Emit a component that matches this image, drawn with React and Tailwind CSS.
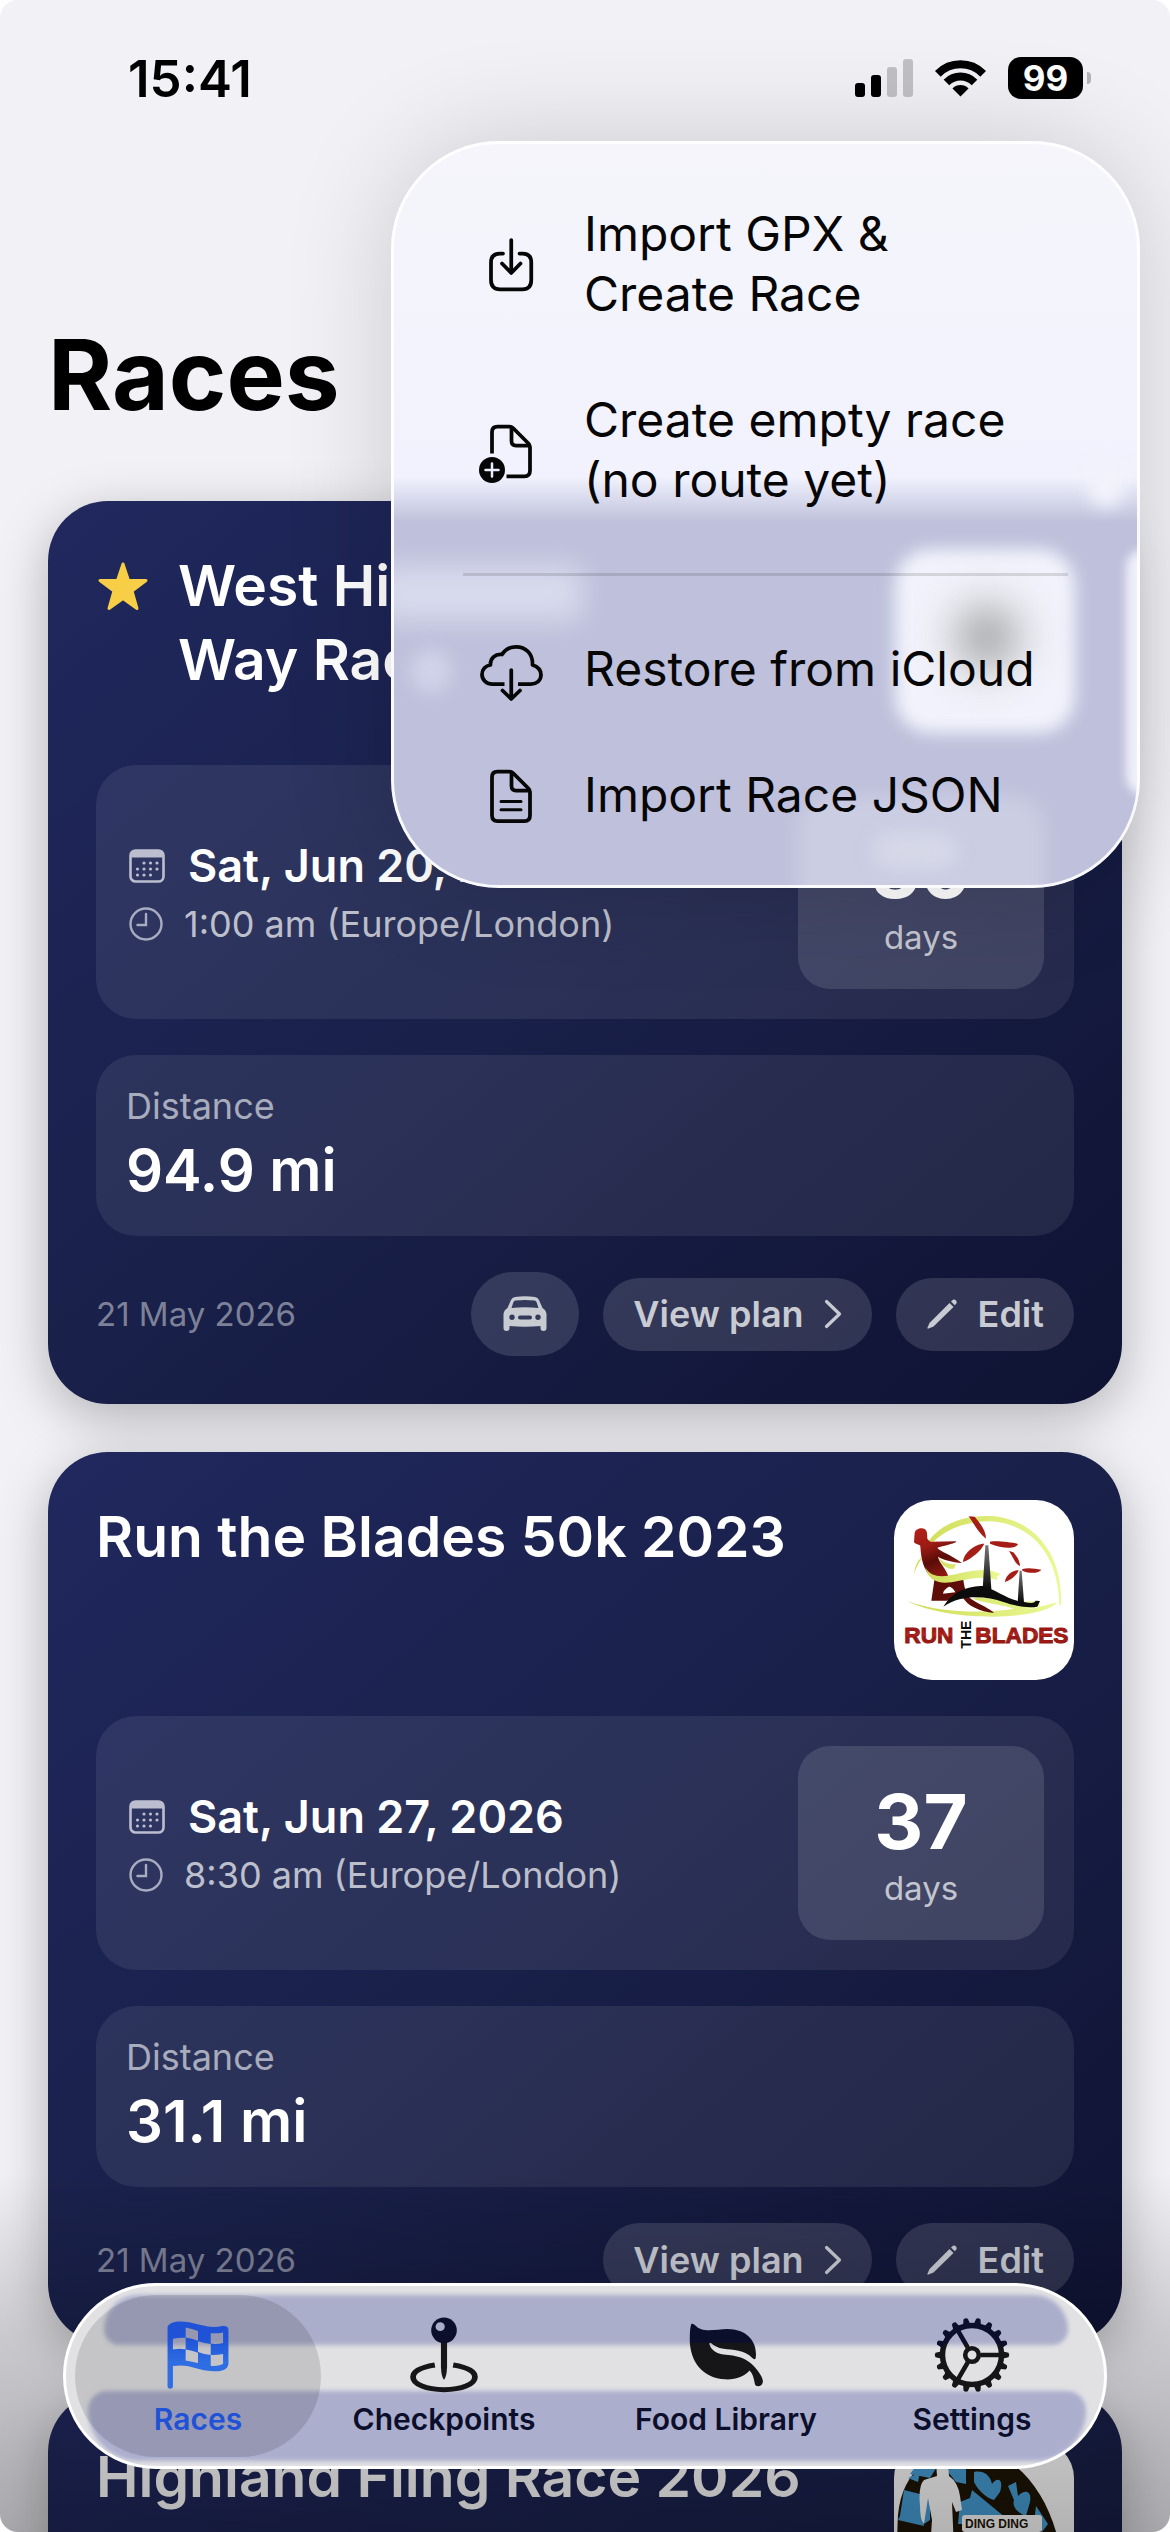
import React from "react";

function Wifi() {
  return (
    <svg width="51" height="37" viewBox="0 0 51 37" aria-hidden="true">
      <defs>
        <clipPath id="wifi-wedge">
          <polygon points="25.5,36.5 -12,-1 63,-1" />
        </clipPath>
      </defs>
      <g clipPath="url(#wifi-wedge)" fill="none" stroke="#000">
        <circle cx="25.5" cy="36" r="31.7" strokeWidth="8" />
        <circle cx="25.5" cy="36" r="19.5" strokeWidth="8" />
        <circle cx="25.5" cy="36" r="11" fill="#000" stroke="none" />
      </g>
    </svg>
  );
}

function Signal() {
  return (
    <svg width="58" height="38" viewBox="0 0 58 38" aria-hidden="true">
      <rect x="0" y="24" width="10" height="14" rx="3" />
      <rect x="16" y="16" width="10" height="22" rx="3" />
      <rect x="32" y="8" width="10" height="30" rx="3" fill="#c1c1c5" />
      <rect x="48" y="0" width="10" height="38" rx="3" fill="#c1c1c5" />
    </svg>
  );
}

function StatusBar() {
  return (
    <div className="flex h-[156px] items-center justify-between pl-[128px] pr-[79px]">
      <span className="text-[51px] leading-none font-semibold text-black">15:41</span>
      <div className="flex items-center gap-[22px]">
        <Signal />
        <Wifi />
        <div className="flex items-center gap-1">
          <span className="flex h-[42px] w-[75px] items-center justify-center rounded-[13px] bg-black text-[35px] leading-none font-bold text-white">
            99
          </span>
          <span className="h-3 w-1 rounded-r-full bg-[#b4b4b8]" />
        </div>
      </div>
    </div>
  );
}

const menuIcon = {
  width: 65,
  height: 70,
  fill: "none",
  stroke: "#060606",
  strokeWidth: 7.5,
  strokeLinecap: "round",
  strokeLinejoin: "round",
  "aria-hidden": true,
  className: "-my-[5px] shrink-0",
};

function ImportIcon() {
  return (
    <svg viewBox="196 199 130 140" {...menuIcon}>
      <path d="M244 248H238Q220 248 220 266V301Q220 319.500 238 319.500H283Q300.500 319.500 300.500 301V266Q300.500 248 283 248H277" />
      <path d="M260.500 221V286M242 268L260.500 287L279 268" />
    </svg>
  );
}

function NewDocIcon() {
  return (
    <svg viewBox="196 573 130 140" {...menuIcon}>
      <path strokeLinecap="butt" d="M222 650V607Q222 596 233 596H257Q261 596 264 599L295 630Q298 633 298 637V684Q298 695.500 287 695.500H251" />
      <path d="M261 598V625Q261 634 270 634H296" />
      <circle cx="222" cy="683" r="26" fill="#060606" stroke="none" />
      <path d="M222 670V696M209 683H235" stroke="#eceffc" strokeWidth="5" />
    </svg>
  );
}

function CloudDownIcon() {
  return (
    <svg viewBox="196 1013 130 140" {...menuIcon}>
      <path strokeLinecap="butt" d="M247 1113H223C211 1113 202 1105 202 1094C202 1084 209 1076 219 1075C218 1062 229 1052 242 1054C248 1044 258 1038.500 270 1038.500C289 1038.500 304 1052 303 1075C313 1078 320 1085 320 1095C320 1106 311 1113 300 1113H274" />
      <path d="M260.500 1085V1142M243 1126L260.500 1143L278 1126" />
    </svg>
  );
}

function DocIcon() {
  return (
    <svg viewBox="196 1267 130 140" {...menuIcon}>
      <path d="M222 1301Q222 1290 233 1290H257Q261 1290 264 1293L295 1324Q298 1327 298 1331V1378Q298 1389 287 1389H233Q222 1389 222 1378Z" />
      <path d="M261 1292V1319Q261 1328 270 1328H296" />
      <path d="M240 1350H280M240 1366.500H280" strokeWidth="6" />
    </svg>
  );
}

function MenuItem({ icon, children }) {
  return (
    <button
      type="button"
      role="menuitem"
      className="flex w-full items-center gap-10 py-[33px] pr-[60px] pl-[88px] text-left text-[48px] leading-[60px] text-[#060606]"
    >
      {icon}
      <span>{children}</span>
    </button>
  );
}

function GlassGlow() {
  return (
    <div aria-hidden="true" className="pointer-events-none absolute inset-0">
      <div className="absolute top-[424px] -left-4 h-14 w-[208px] rounded-2xl bg-[#d7d9ec] blur-[13px]" />
      <div className="absolute top-[508px] left-5 h-11 w-10 rounded-full bg-[#d0d3ea] blur-[9px]" />
      <div className="absolute top-[408px] left-[504px] h-[184px] w-[180px] rounded-[36px] bg-[#f1f2fb] blur-[8px]" />
      <div className="absolute top-[446px] left-[546px] size-[100px] rounded-full bg-[#e1e2e6] blur-[16px]" />
      <div className="absolute top-[468px] left-[568px] size-14 rounded-full bg-[#b4b5b9] blur-[15px]" />
      <div className="absolute top-[655px] left-[407px] h-32 w-[246px] rounded-[32px] bg-white/20 blur-[9px]" />
      <div className="absolute top-[692px] left-[482px] h-9 w-[84px] rounded-full bg-[#d6d8e8] blur-[9px]" />
      <div className="absolute top-[318px] right-4 h-12 w-9 rounded-full bg-[#f1f2fb] blur-[8px]" />
      <div className="absolute top-[408px] -right-6 h-[246px] w-[38px] rounded-full bg-[#eff0f9] blur-[5px]" />
    </div>
  );
}

function AddMenu() {
  return (
    <div
      role="menu"
      aria-label="Add race"
      className="absolute top-[141px] right-[30px] w-[749px] overflow-hidden rounded-[108px] bg-linear-to-b from-[#f5f5fb] via-[#f1f2fd] via-45% to-[#bfc1dc] to-51% py-[30px] shadow-[0_0_110px_rgba(0,0,0,0.16)]"
    >
      <GlassGlow />
      <div className="relative">
        <MenuItem icon={<ImportIcon />}>
          Import GPX &amp;
          <br />
          Create Race
        </MenuItem>
        <MenuItem icon={<NewDocIcon />}>
          Create empty race
          <br />
          (no route yet)
        </MenuItem>
        <div role="separator" className="mx-[72px] my-[30px] h-[3px] bg-black/12" />
        <MenuItem icon={<CloudDownIcon />}>Restore from iCloud</MenuItem>
        <MenuItem icon={<DocIcon />}>Import Race JSON</MenuItem>
      </div>
      <div aria-hidden="true" className="pointer-events-none absolute inset-0 rounded-[108px] border-[3px] border-white/90" />
    </div>
  );
}

function Star() {
  return (
    <svg width="54" height="54" viewBox="0 0 54 54" className="shrink-0" aria-label="Favourite">
      <path
        d="M27 4L32.500 20.500H50L36 31L41 48.500L27 38.500L13 48.500L18 31L4 20.500H21.500Z"
        fill="#f7ce45"
        stroke="#f7ce45"
        strokeWidth="3"
        strokeLinejoin="round"
      />
    </svg>
  );
}

const dots = [
  [15, 14], [21.500, 14], [28, 14],
  [8.500, 20], [15, 20], [21.500, 20], [28, 20],
  [8.500, 26], [15, 26], [21.500, 26],
];

function CalendarIcon() {
  return (
    <svg width="40" height="34" viewBox="-3 0 40 34" aria-hidden="true">
      <rect x="1.500" y="1.500" width="33" height="31" rx="5" fill="none" stroke="#bcbed0" strokeWidth="2.600" />
      <path d="M1 8.500V6Q1 1 6 1H30Q35 1 35 6V8.500Z" fill="#bcbed0" />
      {dots.map(([x, y]) => (
        <circle key={`${x}-${y}`} cx={x} cy={y} r="1.600" fill="#bcbed0" />
      ))}
    </svg>
  );
}

function ClockIcon() {
  return (
    <svg width="38" height="36" viewBox="-2 0 38 36" fill="none" stroke="#a9acc0" strokeWidth="2.400" strokeLinecap="round" aria-hidden="true">
      <circle cx="18" cy="18" r="15.500" />
      <path d="M18 8V19H9.500" />
    </svg>
  );
}

function CarIcon() {
  return (
    <svg width="44" height="36" viewBox="0 0 44 36" aria-hidden="true">
      <path
        fillRule="evenodd"
        fill="#c9cbd3"
        d="M12 1Q22 -0.500 32 1Q35 1.500 36 4L39.500 12Q43 14 43.500 18V32Q43.500 35 40.500 35Q37.500 35 37.500 32V30Q22 31.500 6.500 30V32Q6.500 35 3.500 35Q0.500 35 0.500 32V18Q1 14 4.500 12L8 4Q9 1.500 12 1ZM12.500 4.500Q11 4.500 10.500 6L8.500 12Q22 10.500 35.500 12L33.500 6Q33 4.500 31.500 4.500Q22 3.500 12.500 4.500ZM9 18.500A2.700 2.700 0 1 0 9 23.900A2.700 2.700 0 1 0 9 18.500ZM35 18.500A2.700 2.700 0 1 0 35 23.900A2.700 2.700 0 1 0 35 18.500ZM17 19.500Q15 19.500 15 21.500Q15 23.500 17 23.500H27Q29 23.500 29 21.500Q29 19.500 27 19.500Z"
      />
    </svg>
  );
}

function ChevronIcon() {
  return (
    <svg width="18" height="30" viewBox="0 0 18 30" fill="none" stroke="#c9cbd3" strokeWidth="3.200" strokeLinecap="round" strokeLinejoin="round" aria-hidden="true">
      <path d="M2.500 2.500L15.500 15L2.500 27.500" />
    </svg>
  );
}

function PencilIcon() {
  return (
    <svg width="32" height="32" viewBox="0 0 32 32" fill="#c9cbd3" aria-hidden="true">
      <path d="M23.500 5L27.500 9L7.500 28.500L2.500 30.500Q1 31 1.500 29.500L3.500 25Z" />
      <path d="M25 3.500L27 1.800Q28.500 1 30 2.500Q31.300 4 30.300 5.500L28.800 7.300Z" />
    </svg>
  );
}

function PlainLogo() {
  return (
    <svg viewBox="0 0 180 180" className="size-full" aria-hidden="true">
      <rect width="180" height="180" fill="#fbfbfb" />
      <circle cx="93" cy="92" r="50" fill="#d8d8d6" />
      <circle cx="93" cy="90" r="26" fill="#5c5c5c" />
    </svg>
  );
}

function BladesLogo() {
  return (
    <svg viewBox="42 60 540 540" className="size-full" role="img" aria-label="Run the Blades">
      <defs>
        <linearGradient id="lime" x1="0" x2="1">
          <stop offset="0" stopColor="#cfdc58" />
          <stop offset="1" stopColor="#eaf994" />
        </linearGradient>
        <linearGradient id="runner" x1="0" x2="0.400" y1="0" y2="1">
          <stop offset="0" stopColor="#b3211a" />
          <stop offset="0.400" stopColor="#9c1b14" />
          <stop offset="0.700" stopColor="#5a0c08" />
          <stop offset="1" stopColor="#8c1811" />
        </linearGradient>
        <linearGradient id="wordmark" x1="0" x2="0" y1="0" y2="1">
          <stop offset="0" stopColor="#5d0a08" />
          <stop offset="0.500" stopColor="#c3221b" />
          <stop offset="0.600" stopColor="#951914" />
          <stop offset="1" stopColor="#a31c16" />
        </linearGradient>
        <linearGradient id="tower" x1="0" x2="0" y1="0" y2="1">
          <stop offset="0" stopColor="#777" />
          <stop offset="1" stopColor="#0a0a0a" />
        </linearGradient>
      </defs>
      <rect x="42" y="60" width="540" height="540" fill="#fff" />
      <path d="M102 284C105 250 118 236 128 232C115 250 108 262 102 284ZM146 182C185 132 250 105 330 108C450 112 550 210 543 376H538C536 220 450 130 330 124C262 124 200 145 160 186Z" fill="url(#lime)" />
      <path d="M82 363C180 410 400 400 480 378L474 362C420 370 380 356 320 354L290 352C250 360 360 372 400 386C320 400 180 400 82 363ZM82 363C200 425 480 425 532 367C500 374 470 388 420 388C300 402 160 396 82 363Z" fill="url(#lime)" />
      <path d="M104 158C108 142 138 138 141 158L142 176C146 182 150 185 156 185L228 184C230 186 228 190 172 203C180 215 210 222 246 249C216 246 190 240 174 230C178 250 200 268 206 292L158 296C130 270 124 240 121 200C122 192 106 195 102 186Z" fill="url(#runner)" />
      <path d="M164 294L250 300C254 330 262 352 278 360C300 375 330 385 342 399C300 395 262 378 248 352L200 362H154ZM207 320C198 324 190 332 189 341L226 337C222 328 214 320 207 320Z" fillRule="evenodd" fill="#5e0d09" />
      <path d="M176 232C190 252 212 254 228 252L222 266H208C195 262 184 256 176 232ZM136 262C150 290 180 292 210 286C260 276 310 262 345 276L362 282L350 290L354 300C300 285 260 300 215 307C170 314 145 296 136 262Z" fill="url(#lime)" />
      <path d="M316 196H325L334 328H308Z" fill="url(#tower)" />
      <path d="M419 272H425L432 368H413Z" fill="url(#tower)" />
      <path d="M190 380C220 330 270 318 308 318C350 328 380 360 430 366C455 370 462 370 467 362L480 363L472 380C440 386 400 376 370 366C320 350 250 340 190 380Z" fill="#0c0c0c" />
      <g fill="#a51d17">
        <path d="M266 109L284 110C300 130 318 150 318 176C296 160 284 134 266 109Z" />
        <path d="M330 185C350 182 390 186 414 192C410 206 370 208 330 191Z" />
        <path d="M313 191C290 190 250 216 249 246C275 236 302 214 313 191Z" />
        <path d="M387 213L400 217C412 230 420 244 420 259C404 250 400 232 387 213Z" />
        <path d="M427 267C445 262 465 266 484 269C478 280 450 282 427 272Z" />
        <path d="M416 271C398 270 376 286 375 306C392 300 410 286 416 271Z" />
      </g>
      <g fontFamily="'Liberation Sans',sans-serif" fontWeight="700">
        <text x="73" y="488" fontSize="68" fill="url(#wordmark)" stroke="#951914" strokeWidth="3">RUN</text>
        <text x="286" y="488" fontSize="68" fill="url(#wordmark)" stroke="#951914" strokeWidth="3">BLADES</text>
        <text transform="translate(272 506) rotate(-90)" fontSize="42" fill="#0b0b0b">THE</text>
      </g>
    </svg>
  );
}

function DingLogo() {
  return (
    <svg viewBox="0 0 180 180" className="size-full" role="img" aria-label="Ding Ding">
      <rect width="180" height="180" fill="#fff" />
      <path d="M4 75C8 30 40 8 75 8C125 10 160 60 168 120V180H10C4 140 2 110 4 75Z" fill="#1d1405" />
      <g fill="#47a0d8">
        <path d="M6 76L10 50L26 54L30 86L4 80Z" />
        <path d="M14 38L26 32L24 42ZM16 34L28 18L46 22L36 38Z" />
        <path d="M56 22H72V44L62 42L54 32Z" />
        <path d="M80 32C88 30 96 34 98 44C104 36 110 40 106 52L100 60C92 58 84 50 80 42Z" />
        <path d="M66 62L76 58L78 50L112 78L106 84H64Z" />
        <path d="M114 46L122 42L124 56C132 48 138 52 136 62L132 76C122 72 118 66 120 60Z" />
        <path d="M142 66L154 84L148 92L140 82Z" />
        <path d="M26 58L36 52V80L30 84ZM16 100L26 92L34 110L20 108Z" />
      </g>
      <path d="M42 22Q48 12 54 22L55 36Q64 42 66 56L68 70L62 72L58 62L60 110H36L38 80L34 58L30 84Q26 80 26 66Q24 46 30 40L43 36Z" fill="#fff" />
      <rect x="68" y="75" width="80" height="17" rx="3" fill="#fff" />
      <text x="71" y="88" fontSize="12" fontWeight="800" fontFamily="'Liberation Sans',sans-serif" fill="#1d1405">DING DING</text>
    </svg>
  );
}

function PillButton({ children }) {
  return (
    <button
      type="button"
      className="flex h-[73px] items-center gap-5 rounded-full bg-white/13 px-[30px] text-[36px] leading-none font-semibold text-[#c9cbd3]"
    >
      {children}
    </button>
  );
}

function RaceCard({ race }) {
  return (
    <article className="rounded-[60px] bg-linear-to-br from-[#20285e] via-[#192049] to-[#0f1333] p-12 shadow-[0_14px_52px_rgba(0,0,0,0.26)]">
      <div className="flex h-[180px] items-start justify-between gap-6">
        <div className="flex gap-7">
          {race.favourite && (
            <div className="flex h-[76px] items-center">
              <Star />
            </div>
          )}
          <h2 className="text-[57px] leading-[74px] font-semibold text-white">
            {race.title.map((line) => (
              <span key={line} className="block whitespace-nowrap">
                {line}
              </span>
            ))}
          </h2>
        </div>
        <div className="size-[180px] shrink-0 overflow-hidden rounded-[38px]">{race.logo}</div>
      </div>

      <div className="mt-9 flex items-center justify-between rounded-[40px] bg-white/8 p-[30px]">
        <div className="flex flex-col gap-1">
          <div className="flex items-center gap-[22px]">
            <CalendarIcon />
            <span className="text-[45px] leading-[60px] font-semibold text-white">{race.date}</span>
          </div>
          <div className="flex items-center gap-5">
            <ClockIcon />
            <span className="text-[36px] leading-[48px] text-white/70">{race.time}</span>
          </div>
        </div>
        <div className="flex w-[246px] flex-col items-center rounded-[32px] bg-white/12 py-[30px]">
          <span className="text-[76px] leading-[90px] font-bold text-white">{race.days}</span>
          <span className="text-[33px] leading-[44px] text-white/70">days</span>
        </div>
      </div>

      <div className="mt-9 flex flex-col gap-[6px] rounded-[40px] bg-white/8 p-[30px]">
        <span className="text-[36px] leading-[43px] text-white/60">Distance</span>
        <span className="text-[58px] leading-[72px] font-semibold text-white">{race.distance}</span>
      </div>

      <div className="mt-9 flex items-center justify-between">
        <span className="text-[33px] leading-[48px] text-white/45">21 May 2026</span>
        <div className="flex items-center gap-6">
          {race.favourite && (
            <button type="button" aria-label="Drive to race" className="flex h-[84px] w-[108px] items-center justify-center rounded-full bg-white/13">
              <CarIcon />
            </button>
          )}
          <PillButton>
            View plan
            <ChevronIcon />
          </PillButton>
          <PillButton>
            <PencilIcon />
            Edit
          </PillButton>
        </div>
      </div>
    </article>
  );
}

const races = [
  {
    title: ["West Highland", "Way Race"],
    favourite: true,
    date: "Sat, Jun 20, 2026",
    time: "1:00 am (Europe/London)",
    days: "30",
    distance: "94.9 mi",
    logo: <PlainLogo />,
  },
  {
    title: ["Run the Blades 50k 2023"],
    date: "Sat, Jun 27, 2026",
    time: "8:30 am (Europe/London)",
    days: "37",
    distance: "31.1 mi",
    logo: <BladesLogo />,
  },
  {
    title: ["Highland Fling Race 2026"],
    date: "Sat, Jul 4, 2026",
    time: "6:00 am (Europe/London)",
    days: "44",
    distance: "53 mi",
    logo: <DingLogo />,
  },
];

function FlagIcon() {
  return (
    <svg width="64" height="70" viewBox="440 420 166 208" preserveAspectRatio="none" aria-hidden="true">
      <defs>
        <linearGradient id="flag-blue" x1="0" x2="0" y1="0" y2="1">
          <stop offset="0.250" stopColor="#1f52d6" />
          <stop offset="0.600" stopColor="#2e6de2" />
        </linearGradient>
      </defs>
      <path
        fill="url(#flag-blue)"
        fillRule="evenodd"
        d="M444 440C450 424 475 421 500 427C530 434 555 446 585 438Q602 435 602 450V550C600 568 585 574 562 572C520 570 500 548 458 557V616Q458 624 451 624Q444 624 444 616ZM491 442V472Q507 474 523 482V453Q507 446 491 442ZM556 459V490Q572 493 588 488V457Q572 461 556 459ZM458 476V508Q475 503 491 507V473Q475 471 458 476ZM523 483V515Q540 523 556 524V491Q540 489 523 483ZM491 508V540Q507 543 523 548V517Q507 511 491 508ZM556 524V556Q572 559 588 551V521Q572 525 556 524Z"
      />
    </svg>
  );
}

function PinIcon() {
  return (
    <svg width="68" height="76" viewBox="1077 410 178 228" preserveAspectRatio="none" aria-hidden="true">
      <path d="M1142 554C1110 560 1085 572 1085 590C1085 612 1120 628 1166 628C1212 628 1247 612 1247 590C1247 572 1222 560 1190 554" fill="none" stroke="#161618" strokeWidth="15" />
      <path d="M1158 480H1174V560Q1173 590 1166 598Q1159 590 1158 560Z" fill="#161618" />
      <ellipse cx="1166" cy="450" rx="33.500" ry="38.500" fill="#0b0f2b" />
      <ellipse cx="1156" cy="439" rx="12" ry="13" fill="#abaecb" />
    </svg>
  );
}

function LeafIcon() {
  return (
    <svg width="75" height="64" viewBox="304 430 198 193" preserveAspectRatio="none" aria-hidden="true">
      <defs>
        <linearGradient id="leaf-ink" x1="0" x2="0" y1="0" y2="1">
          <stop offset="0.300" stopColor="#0b0f2b" />
          <stop offset="0.310" stopColor="#161618" />
        </linearGradient>
      </defs>
      <path
        fill="url(#leaf-ink)"
        d="M310 433Q315 430 320 437C340 462 375 448 405 448C460 448 486 490 480 536Q478 542 472 536C450 510 420 512 395 508C380 505 370 498 362 490Q357 488 358 494C362 510 375 522 395 525C430 528 455 535 475 560C492 582 500 598 499 608C498 622 480 625 478 614C475 595 472 582 464 573C450 590 430 601 400 600C340 598 306 545 306 480Q306 445 310 433Z"
      />
    </svg>
  );
}

const teeth = Array.from({ length: 18 }, (_, i) => i * 20);

function GearIcon() {
  return (
    <svg width="76" height="76" viewBox="-38 -38 76 76" aria-hidden="true">
      <defs>
        <linearGradient id="gear-ink" gradientUnits="userSpaceOnUse" x1="0" x2="0" y1="-12" y2="-11">
          <stop offset="0" stopColor="#0b0f2b" />
          <stop offset="1" stopColor="#161618" />
        </linearGradient>
      </defs>
      <g fill="none" stroke="url(#gear-ink)">
        <circle r="29.500" strokeWidth="5.500" />
        <circle r="6.800" strokeWidth="4.600" />
        <path d="M8.500 0.010H29M-4.200 -7.300L-14.500 -25.100M-4.200 7.300L-14.500 25.100" strokeWidth="4.600" />
      </g>
      {teeth.map((angle) => (
        <path key={angle} transform={`rotate(${angle})`} d="M30 -3.800L36.500 -2.200Q38 0 36.500 2.200L30 3.800Z" fill={angle > 195 && angle < 345 ? "#0b0f2b" : "#161618"} />
      ))}
    </svg>
  );
}

function Tab({ icon, label, active }) {
  return (
    <a
      href="#"
      aria-current={active ? "page" : undefined}
      className={
        "flex w-[246px] flex-col items-center gap-2 rounded-full pt-[22px] pb-5 text-[30px] leading-9 font-semibold " +
        (active ? "bg-black/12 text-[#1f52d6]" : "text-[#0b0f2b]")
      }
    >
      <span className="flex h-[76px] items-center">{icon}</span>
      {label}
    </a>
  );
}

function TabBar() {
  return (
    <nav
      aria-label="Main"
      className="absolute right-[63px] bottom-[63px] left-[63px] overflow-hidden rounded-full border-[3px] border-white bg-[#e1e1e4] px-[9px] py-[9px]"
    >
      <div aria-hidden="true" className="absolute top-[9px] right-[36px] left-[38px] h-[50px] rounded-t-[44px] rounded-b-[20px] bg-[#abaecb] blur-[2px]" />
      <div aria-hidden="true" className="absolute right-[18px] bottom-[5px] left-[22px] h-[70px] rounded-t-[24px] rounded-b-[64px] bg-[#abaecd] blur-[2px]" />
      <div className="relative flex justify-between">
        <div className="flex">
          <Tab active icon={<FlagIcon />} label="Races" />
          <Tab icon={<PinIcon />} label="Checkpoints" />
        </div>
        <div className="flex">
          <Tab icon={<LeafIcon />} label="Food Library" />
          <Tab icon={<GearIcon />} label="Settings" />
        </div>
      </div>
    </nav>
  );
}

export default function App() {
  return (
    <div className="h-screen bg-white font-['Inter','Liberation_Sans',sans-serif]">
      <div className="relative h-full overflow-hidden rounded-[18px] bg-[#f1f1f6]">
        <StatusBar />
        <header className="px-12 pt-[159px] pb-[66px]">
          <h1 className="text-[98px] leading-[120px] font-bold text-black">Races</h1>
        </header>
        <main className="flex flex-col gap-12 px-12">
          {races.map((race) => (
            <RaceCard key={race.date} race={race} />
          ))}
        </main>
        <div
          aria-hidden="true"
          className="pointer-events-none absolute inset-x-0 bottom-0 h-[360px] bg-linear-to-b from-black/0 via-black/16 via-45% to-black/30"
        />
        <TabBar />
        <AddMenu />
      </div>
    </div>
  );
}
